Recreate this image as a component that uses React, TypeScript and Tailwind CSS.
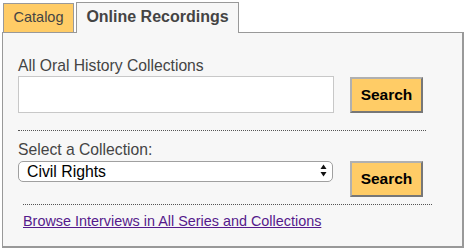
import React from "react";

function SearchButton() {
  return (
    <button
      type="button"
      className="h-[36px] w-[73px] bg-[#ffcc66] border-2 border-t-[#b0b0b0] border-l-[#b0b0b0] border-r-[#777777] border-b-[#777777] text-black font-bold text-[15.5px] leading-[18px] font-['Liberation_Sans',Arial,sans-serif]"
    >
      Search
    </button>
  );
}

export default function App() {
  return (
    <div className="w-[465px] h-[250px] bg-white font-['Liberation_Sans',Arial,sans-serif] overflow-hidden">
      <div className="flex items-end gap-[2px] pl-[3px] pt-[2px] h-[32px]">
        <div className="h-[29px] w-[71px] bg-[#ffcc66] border border-b-0 border-[#999999] text-center pt-[5px] text-[14.5px] leading-[17px] text-[#444444]">
          Catalog
        </div>
        <div className="relative z-10 -mb-px h-[31px] w-[163px] bg-[#f7f7f7] border border-b-0 border-[#999999] text-center pt-[5px] text-[16px] leading-[18px] font-bold text-[#444444]">
          Online Recordings
        </div>
      </div>
      <div className="ml-[2px] w-[462px] h-[216px] bg-[#f7f7f7] border-t border-l border-r-2 border-b-2 border-[#999999] pl-[15px] pt-[24px] flex flex-col">
        <div className="text-[15.7px] leading-[17px] text-[#444444]">
          All Oral History Collections
        </div>
        <div className="flex items-start mt-[2px]">
          <input
            type="text"
            className="h-[37px] w-[316px] bg-white border border-[#c8c8c8] outline-none px-2 text-[15px]"
          />
          <div className="ml-[16px] mt-[1px]">
            <SearchButton />
          </div>
        </div>
        <div className="mt-[17px] w-[408px] border-t border-dotted border-[#555555]" />
        <div className="mt-[10px] text-[15.7px] leading-[17px] text-[#444444]">
          Select a Collection:
        </div>
        <div className="flex items-start mt-[2px]">
          <div className="relative">
            <select className="appearance-none h-[21px] w-[315px] bg-white border border-[#a0a0a0] rounded-[5px] pl-[8px] text-[15.8px] leading-[19px] text-black outline-none font-['Liberation_Sans',Arial,sans-serif]">
              <option>Civil Rights</option>
            </select>
            <svg
              className="pointer-events-none absolute left-[302px] top-[4px]"
              width="7"
              height="13"
              viewBox="0 0 7 13"
            >
              <polygon points="3.5,0.5 6.5,5 0.5,5" fill="#111" />
              <polygon points="0.5,8 6.5,8 3.5,12.5" fill="#111" />
            </svg>
          </div>
          <div className="ml-[17px] mt-[1px]">
            <SearchButton />
          </div>
        </div>
        <div className="mt-[7px] ml-[5px] w-[409px] border-t border-dotted border-[#555555]" />
        <div className="mt-[4px] ml-[5px]">
          <a href="#" className="text-[14.4px] leading-[17px] text-[#551a8b] underline">
            Browse Interviews in All Series and Collections
          </a>
        </div>
      </div>
    </div>
  );
}
